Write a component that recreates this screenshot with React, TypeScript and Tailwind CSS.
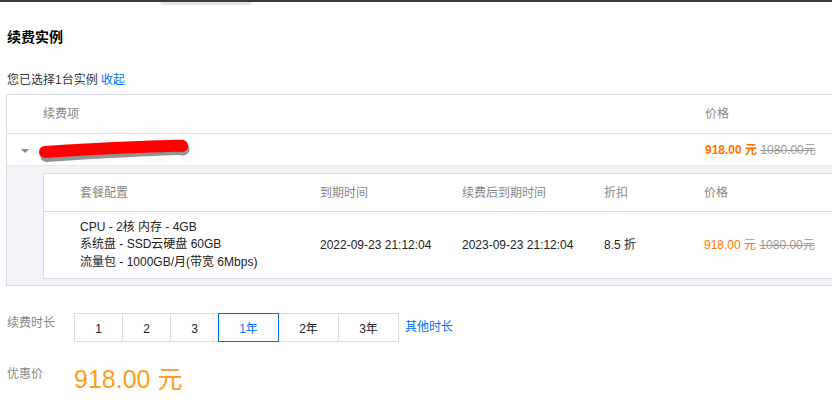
import React, { FC } from "react";

const font = "font-['Liberation_Sans','Noto_Sans_CJK_SC',sans-serif]";

const Price: FC<{ bold?: boolean }> = ({ bold }) => (
  <span className="whitespace-nowrap">
    <span className={`text-[#ff7200] ${bold ? "font-bold" : ""}`}>918.00 元</span>{" "}
    <span className="text-[#999] line-through">1080.00元</span>
  </span>
);

const Scribble: FC = () => (
  <svg width="170" height="30" viewBox="0 0 170 30" className="absolute left-[22px] top-[1px] overflow-visible">
    <path
      d="M16 18.5 Q 60 15.5 110 13 T 152 12"
      stroke="#3a3a3a"
      strokeOpacity="0.55"
      strokeWidth="12"
      strokeLinecap="round"
      fill="none"
      transform="translate(1.5 2.5)"
    />
    <path
      d="M16 17 Q 60 14 110 12 T 152 11"
      stroke="#ff0000"
      strokeWidth="12"
      strokeLinecap="round"
      fill="none"
    />
  </svg>
);

const durations = ["1", "2", "3", "1年", "2年", "3年"];

export default function App() {
  return (
    <div className={`w-[832px] h-[405px] overflow-hidden bg-white text-[12px] text-[#222] ${font}`}>
      <div className="h-[2px] bg-[#3a3a3a]" />
      <div className="h-[4px] pl-[160px] flex items-start">
        <div className="h-[3px] w-[92px] bg-[#e4e4e4] rounded-b-sm" />
      </div>

      <div className="mt-[21px] pl-[7px] h-[20px] leading-[20px] text-[14px] font-bold text-black">续费实例</div>

      <div className="mt-[24px] pl-[7px] h-[18px] leading-[18px] text-[#333]">
        您已选择1台实例 <span className="text-[#006eff] cursor-pointer">收起</span>
      </div>

      {/* outer table */}
      <div className="mt-[5px] ml-[6px] w-[860px] border border-[#d9dde3]">
        <div className="flex h-[39px] items-center border-b border-[#d9dde3] text-[#888]">
          <div className="pl-[36px] w-[698px]">续费项</div>
          <div>价格</div>
        </div>
        <div className="relative flex h-[31px] items-center">
          <div className="w-[698px] relative h-full">
            <span className="absolute left-[14px] top-[15px] w-0 h-0 border-l-[4px] border-r-[4px] border-t-[4px] border-l-transparent border-r-transparent border-t-[#888]" />
            <Scribble />
          </div>
          <Price bold />
        </div>

        <div className="bg-[#f2f4f7] pt-[7px] pb-[6px] pl-[36px] border-t border-[#e6e9ee]">
          <div className="border border-[#d9dde3] bg-white">
            <div className="flex h-[38px] items-center border-b border-[#d9dde3] text-[#888]">
              <div className="pl-[36px] w-[276px]">套餐配置</div>
              <div className="w-[142px]">到期时间</div>
              <div className="w-[142px]">续费后到期时间</div>
              <div className="w-[100px]">折扣</div>
              <div>价格</div>
            </div>
            <div className="flex h-[66px] items-center">
              <div className="pl-[36px] w-[276px] leading-[17.5px]">
                <div>CPU - 2核 内存 - 4GB</div>
                <div>系统盘 - SSD云硬盘 60GB</div>
                <div>流量包 - 1000GB/月(带宽 6Mbps)</div>
              </div>
              <div className="w-[142px]">2022-09-23 21:12:04</div>
              <div className="w-[142px]">2023-09-23 21:12:04</div>
              <div className="w-[100px]">8.5 折</div>
              <Price />
            </div>
          </div>
        </div>
      </div>

      {/* duration */}
      <div className="mt-[27px] flex pl-[7px]">
        <div className="w-[67px] pt-[1px] text-[#888] leading-[18px]">续费时长</div>
        <div className="flex">
          {durations.map((d, i) => {
            const active = d === "1年";
            return (
              <div
                key={d}
                className={`h-[29px] flex items-center justify-center pt-[2px] text-[12px] cursor-pointer ${
                  i < 3 ? "w-[49px]" : "w-[61px]"
                } ${i > 0 ? "-ml-px" : ""} ${
                  active ? "border border-[#006eff] text-[#006eff] relative z-10" : "border border-[#d9dde3] text-[#222]"
                }`}
              >
                {d}
              </div>
            );
          })}
        </div>
        <div className="ml-[6px] pt-[5px] leading-[18px] text-[#006eff] cursor-pointer">其他时长</div>
      </div>

      {/* price */}
      <div className="mt-[22px] flex pl-[7px]">
        <div className="w-[67px] pt-[1px] text-[#888] leading-[18px]">优惠价</div>
        <div className="text-[25px] leading-[30px] text-[#ff9c19]">918.00 元</div>
      </div>
    </div>
  );
}
